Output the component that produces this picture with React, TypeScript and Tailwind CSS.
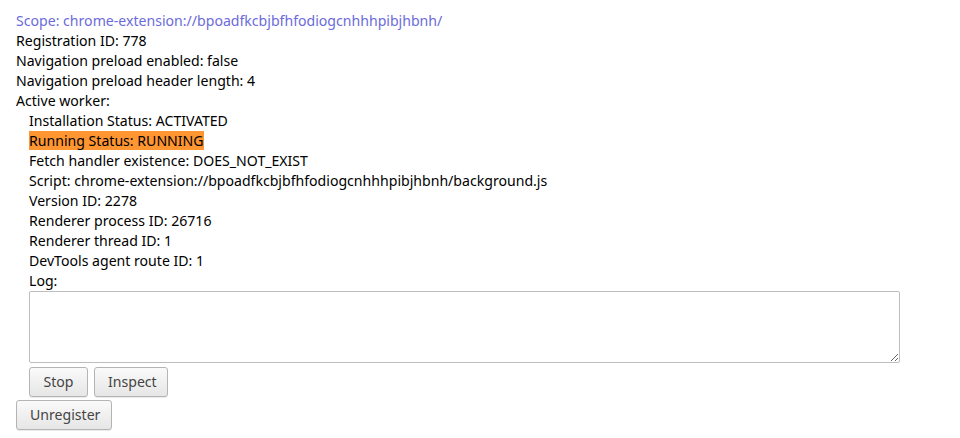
const details: [string, string][] = [
  ['Installation Status', 'ACTIVATED'],
  ['Running Status', 'RUNNING'],
  ['Fetch handler existence', 'DOES_NOT_EXIST'],
  ['Script', 'chrome-extension://bpoadfkcbjbfhfodiogcnhhhpibjhbnh/background.js'],
  ['Version ID', '2278'],
  ['Renderer process ID', '26716'],
  ['Renderer thread ID', '1'],
  ['DevTools agent route ID', '1'],
]

function Btn({ label, className = '' }: { label: string; className?: string }) {
  return (
    <button
      className={`h-[30px] rounded-[3px] border border-[#b4b4b4] bg-gradient-to-b from-[#fafafa] to-[#e6e6e6] px-[13px] text-[#444] shadow-[0_1px_0_rgba(0,0,0,0.08)] ${className}`}
    >
      {label}
    </button>
  )
}

export default function App() {
  return (
    <div className="min-h-[438px] bg-white px-4 pt-[11px] text-[14.1px] leading-[20px] text-black font-['Noto_Sans',sans-serif]">
      <div className="text-[#6b6bdb]">Scope: chrome-extension://bpoadfkcbjbfhfodiogcnhhhpibjhbnh/</div>
      <div>Registration ID: 778</div>
      <div>Navigation preload enabled: false</div>
      <div>Navigation preload header length: 4</div>
      <div>Active worker:</div>
      <div className="pl-[13px]">
        {details.map(([k, v]) => (
          <div key={k}>
            {k === 'Running Status' ? (
              <span className="bg-[#ff9632]">
                {k}: {v}
              </span>
            ) : (
              <>
                {k}: {v}
              </>
            )}
          </div>
        ))}
        <div>Log:</div>
        <textarea className="block h-[72px] w-[871px] rounded-[2px] border border-[#bdbdbd] outline-none" readOnly />
        <div className="mt-[4px] flex gap-[6px]">
          <Btn label="Stop" className="w-[59px]" />
          <Btn label="Inspect" className="w-[74px]" />
        </div>
      </div>
      <Btn label="Unregister" className="mt-[3px] w-[96px]" />
    </div>
  )
}
